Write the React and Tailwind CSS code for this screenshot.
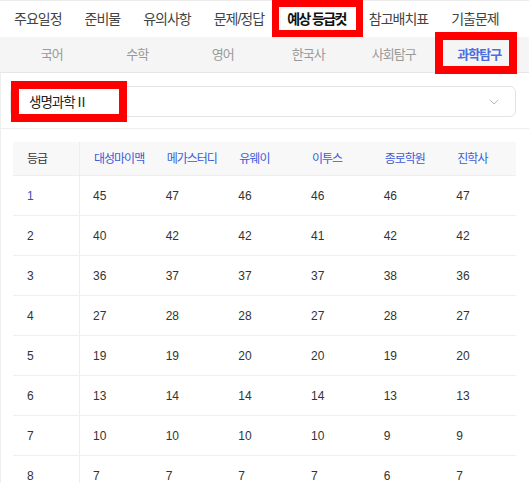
import { ChevronDown } from 'lucide-react'

const topMenu = ['주요일정', '준비물', '유의사항', '문제/정답', '예상 등급컷', '참고배치표', '기출문제']
const subjects = ['국어', '수학', '영어', '한국사', '사회탐구', '과학탐구']
const academies = ['대성마이맥', '메가스터디', '유웨이', '이투스', '종로학원', '진학사']

const cuts = [
  [1, 45, 47, 46, 46, 46, 47],
  [2, 40, 42, 42, 41, 42, 42],
  [3, 36, 37, 37, 37, 38, 36],
  [4, 27, 28, 28, 27, 28, 27],
  [5, 19, 19, 20, 20, 19, 20],
  [6, 13, 14, 14, 14, 13, 13],
  [7, 10, 10, 10, 10, 9, 9],
  [8, 7, 7, 7, 7, 6, 7],
]

export default function App() {
  return (
    <div className="relative w-full overflow-hidden bg-white font-['Liberation_Sans','Noto_Sans_CJK_KR',sans-serif]">
      {/* Top menu */}
      <div className="flex h-[37px] items-center gap-[23px] border-t border-[#ececec] pl-[14px] text-[14px] tracking-[-1px] text-[#444]">
        {topMenu.map((m) => (
          <span
            key={m}
            className={m === '예상 등급컷' ? 'font-bold tracking-[-1.6px] text-[#111]' : ''}
          >
            {m}
          </span>
        ))}
      </div>

      {/* Subject tabs */}
      <div className="flex h-[36px] items-center border-b border-[#e6e6e6] bg-[#f5f5f5] pl-[9px] pr-[7px] text-[13px] tracking-[-1px] text-[#999]">
        {subjects.map((s) => (
          <span
            key={s}
            className={`flex-1 text-center ${s === '과학탐구' ? 'font-bold text-[#4a6ee0]' : ''}`}
          >
            {s}
          </span>
        ))}
      </div>

      <div className="border-l border-[#eeeeee]">
        {/* Select */}
        <div className="pl-[9px] pr-[13px] pt-[13px]">
          <div className="flex h-[31px] items-center justify-between rounded-md border border-[#e3e3e3] pl-[18px] pr-[13px]">
            <span className="font-['Noto_Sans_CJK_KR',sans-serif] text-[13.5px] tracking-[-1px] text-[#222]">
              생명과학Ⅱ
            </span>
            <ChevronDown className="h-[16px] w-[16px] text-[#b5b5b5]" strokeWidth={1.4} />
          </div>
        </div>

        <div className="mt-[11px] border-t border-[#eeeeee]" />

        {/* Table */}
        <div className="ml-[12px] mr-[13px] mt-[13px]">
          <div className="grid h-[34px] grid-cols-[67px_repeat(6,1fr)] border-b border-[#eeeeee] bg-[#f8f8f8] text-[12px] tracking-[-1px]">
            <div className="flex items-center border-r border-[#eeeeee] pl-[14px] text-[#333]">등급</div>
            {academies.map((a) => (
              <div key={a} className="flex items-center pl-[14px] text-[#3b5bdb]">
                {a}
              </div>
            ))}
          </div>
          {cuts.map((row) => (
            <div
              key={row[0]}
              className="grid h-[40px] grid-cols-[67px_repeat(6,1fr)] border-b border-[#f0f0f0] text-[12px] text-[#333]"
            >
              {row.map((v, i) => (
                <div
                  key={i}
                  className={`flex items-center ${
                    i === 0 ? 'border-r border-[#eeeeee] pl-[14px]' : 'pl-[13px]'
                  } ${i === 0 && row[0] === 1 ? 'text-[#2f53b8]' : ''}`}
                >
                  {v}
                </div>
              ))}
            </div>
          ))}
        </div>
      </div>

      {/* Red annotation boxes */}
      <div className="pointer-events-none absolute left-[272px] top-0 h-[37px] w-[91px] border-[7px] border-[#ff0000]" />
      <div className="pointer-events-none absolute left-[435px] top-[32px] h-[42px] w-[82px] border-[8px] border-[#ff0000]" />
      <div className="pointer-events-none absolute left-[11px] top-[81px] h-[41px] w-[116px] border-[8px] border-[#ff0000]" />
    </div>
  )
}
